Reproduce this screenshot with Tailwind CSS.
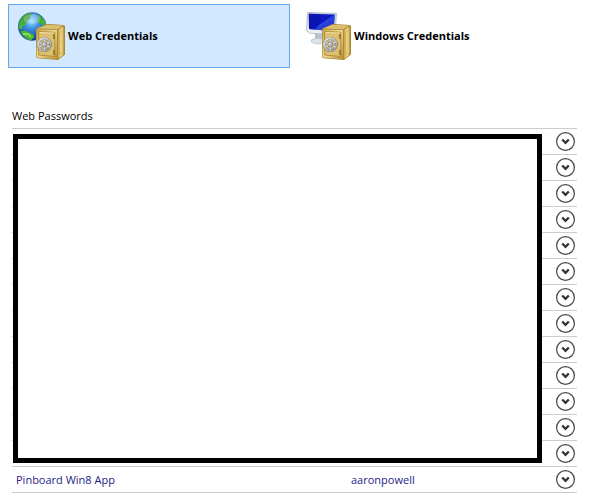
<!DOCTYPE html>
<html lang="en">
<head>
<meta charset="utf-8">
<title>Credential Manager</title>
<script src="https://cdn.jsdelivr.net/npm/@tailwindcss/browser@4"></script>
</head>
<body class="bg-white text-black text-[11px] leading-4 font-['Open_Sans','Noto_Sans',sans-serif]">
<svg class="absolute size-0" aria-hidden="true">
  <defs>
    <linearGradient id="front" x1="0" y1="0" x2="1" y2="1"><stop offset="0" stop-color="#c9a443"/><stop offset=".45" stop-color="#eed994"/><stop offset="1" stop-color="#b9923a"/></linearGradient>
    <linearGradient id="side" x1="0" y1="0" x2="1" y2="0"><stop offset="0" stop-color="#c5a03a"/><stop offset=".5" stop-color="#f0dc98"/><stop offset="1" stop-color="#b68d2b"/></linearGradient>
    <linearGradient id="metal" x1="0" y1="0" x2="1" y2="1"><stop offset="0" stop-color="#f4f4f4"/><stop offset="1" stop-color="#919191"/></linearGradient>
    <radialGradient id="sea" cx=".48" cy=".3" r=".7"><stop offset="0" stop-color="#9be2fb"/><stop offset=".4" stop-color="#3b8fe0"/><stop offset="1" stop-color="#12348f"/></radialGradient>
    <linearGradient id="land" x1="0" y1="0" x2="0" y2="1"><stop offset="0" stop-color="#3d9a3b"/><stop offset="1" stop-color="#48bd35"/></linearGradient>
    <linearGradient id="screen" x1="0" y1="0" x2="1" y2="1"><stop offset="0" stop-color="#1a22b8"/><stop offset=".5" stop-color="#0c14c8"/><stop offset=".52" stop-color="#2b45dc"/><stop offset="1" stop-color="#1929c4"/></linearGradient>
    <linearGradient id="frame" x1="0" y1="0" x2="0" y2="1"><stop offset="0" stop-color="#c9d3de"/><stop offset="1" stop-color="#eef3f7"/></linearGradient>
    <symbol id="safe" viewBox="0 0 48 48">
      <path d="M18.5 16.5 28 12.2Q29 12 30 12l15.500.9Q47 13 47 14.500v28L40 48 19.500 46.300Q18 46 18 45V17.500Z" fill="#a8852f"/>
      <path d="M19 16.500 28.500 12.700 45.500 13.500 39.500 17.200Z" fill="#d9bf70"/>
      <path d="M39.800 18 46.400 14v28L39.800 47.300Z" fill="url(#side)"/>
      <path d="M41.500 20.500 45 18v21.500L41.500 43Z" fill="#e7cf82" stroke="#c4a24b" stroke-width=".6"/>
      <path d="M18.600 17.200 39 18v29.300L18.600 45.600Z" fill="url(#front)"/>
      <path d="M20.600 19.600 36.800 20.200v24.300L20.600 43Z" fill="#dcc070" stroke="#a5832f" stroke-width=".8"/>
      <path d="M21.500 20.500 36 21.100" stroke="#f6e8b4" stroke-width=".8"/>
      <path d="M35 22h2v5h-2zM35 38h2v5h-2z" fill="#9b7b30"/>
      <circle cx="26.300" cy="32.500" r="6.300" fill="#c9b787" stroke="#7d7565" stroke-width="2.600"/>
      <circle cx="26.300" cy="32.500" r="6.300" fill="none" stroke="url(#metal)" stroke-width="1.700"/>
      <path d="M26.300 26.500v12M20.700 29.700l11.200 5.600M31.900 29.700l-11.200 5.600" stroke="#8a867c" stroke-width="1.900"/>
      <path d="M26.300 26.500v12M20.700 29.700l11.200 5.600M31.900 29.700l-11.200 5.600" stroke="#e6e6e6" stroke-width="1.100"/>
      <circle cx="26.300" cy="32.500" r="2.500" fill="url(#metal)" stroke="#75726c" stroke-width=".6"/>
    </symbol>
    <symbol id="globe" viewBox="0 0 48 48">
      <circle cx="14.200" cy="14.500" r="14" fill="url(#sea)" stroke="#2d58a4" stroke-width=".5"/>
      <path d="M2.300 8C4 4 8 1 12 .9L14.500 2 11.500 4.500 12.500 6.500 9 8.500 8 12 4.500 14.500 3.500 18 1 16Q.2 12 2.300 8Z" fill="url(#land)"/>
      <path d="M2.300 19.500 6.500 18.500 11 20.500 15 22 16.500 25 13 28.300Q6 27 2.300 19.500Z" fill="#48b936"/>
      <path d="M18 2.200 22 3.200Q26.800 7 28 12L25 13.500 22.500 11 20.500 11.500 19.500 8 21.500 6Z" fill="url(#land)"/>
      <path d="M5 22 10 22 13 25" fill="none" stroke="#9de56a" stroke-width="1.300"/>
      <ellipse cx="14" cy="7" rx="8.500" ry="5" fill="#fff" opacity=".22"/>
    </symbol>
    <symbol id="monitor" viewBox="0 0 48 48">
      <path d="M11 20h8l1 8h-9Z" fill="#b9c3cd"/>
      <ellipse cx="14.500" cy="29" rx="7.500" ry="2.800" fill="#dce3e9" stroke="#a9b4bf" stroke-width=".6"/>
      <path d="M3.500.5 32.500 1.300 31 22.500 6 21.300 2.300 18.500Z" fill="url(#frame)" stroke="#a5b2c0" stroke-width=".7"/>
      <path d="M4.800 1.800 31 2.500 29.500 19.500 5 17Z" fill="url(#screen)"/>
      <path d="M4.800 1.800 17 2.100Q16 12 12 17.700L5 17Z" fill="#0810a4" opacity=".6"/>
    </symbol>
    <symbol id="expand" viewBox="0 0 19 19">
      <circle cx="9.500" cy="9.500" r="8.900" fill="#fff" stroke="#444" stroke-width="1.200"/>
      <path d="M6.200 7.500 9.500 10.800 12.800 7.500" fill="none" stroke="#333" stroke-width="2.300"/>
    </symbol>
  </defs>
</svg>
<main class="pt-1 pl-2 pr-[18px]">
  <nav class="grid grid-cols-2 gap-1 mr-px" aria-label="Credential type">
    <button type="button" aria-pressed="true" class="flex h-16 items-center gap-0.5 border border-[#66a7e8] bg-[#d1e8ff] pl-[9px] text-left font-bold">
      <svg class="size-12 shrink-0" viewBox="0 0 48 48" aria-hidden="true"><use href="#globe"/><use href="#safe"/></svg>
      <span>Web Credentials</span>
    </button>
    <button type="button" aria-pressed="false" class="flex h-16 items-center gap-0.5 border border-transparent pl-[9px] text-left font-bold">
      <svg class="size-12 shrink-0" viewBox="0 0 48 48" aria-hidden="true"><use href="#monitor"/><use href="#safe"/></svg>
      <span>Windows Credentials</span>
    </button>
  </nav>
  <section class="ml-1 mt-10">
    <h2 class="h-5">Web Passwords</h2>
    <div class="relative">
      <table class="w-full table-fixed border-collapse border-t border-[#ccc] text-[#1e1e87]">
        <colgroup><col class="w-3/5"><col><col class="w-7"></colgroup>
        <tbody id="rows">
          <tr class="h-[26px] border-b border-[#ccc]">
            <td class="p-0 pl-1">Pinboard Win8 App</td>
            <td class="p-0">aaronpowell</td>
            <td class="p-0 pr-0.5"><button type="button" aria-label="Show details" class="ml-auto block size-[19px]"><svg class="size-[19px]" aria-hidden="true"><use href="#expand"/></svg></button></td>
          </tr>
        </tbody>
      </table>
      <div class="absolute top-[6px] right-[35px] bottom-[30px] left-px border-5 border-black bg-white"></div>
    </div>
  </section>
</main>
<script>
  // The entries above the last one are hidden and only keep their expand button.
  const rows = document.getElementById('rows');
  const last = rows.firstElementChild;
  for (let i = 0; i < 13; i++) {
    const row = last.cloneNode(true);
    row.cells[0].textContent = '';
    row.cells[1].textContent = '';
    rows.insertBefore(row, last);
  }
</script>
</body>
</html>
